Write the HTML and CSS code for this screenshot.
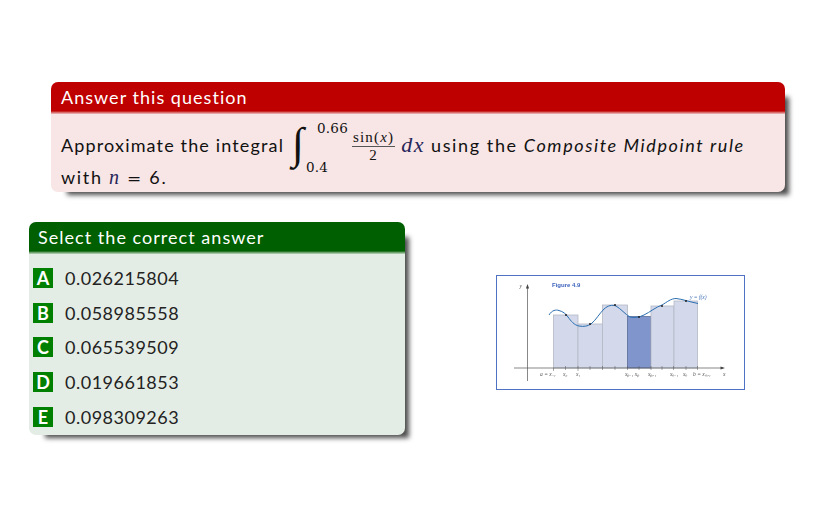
FILE: index.html
```html
<!DOCTYPE html>
<html lang="en">
<head>
<meta charset="utf-8">
<title>Answer this question</title>
<link rel="stylesheet" href="styles.css">
</head>
<body>
<main class="slide">
  <section class="block block-red">
    <h2 class="block-title">Answer this question</h2>
    <div class="block-body question">
      <div class="line line-first">
        <span class="lead">Approximate the integral</span>
        <span class="integral">
          <span class="int-sign">∫</span>
          <span class="limits"><span class="lim-up">0.66</span><span class="lim-low">0.4</span></span>
        </span>
        <span class="frac"><span class="num">sin(<i>x</i>)</span><span class="den">2</span></span>
        <span class="dx">dx</span>
        <span class="tail">using the <em>Composite Midpoint rule</em></span>
      </div>
      <div class="line line-second">
        <span>with <i class="mvar">n</i> <span class="meq">=</span> 6.</span>
      </div>
    </div>
  </section>

  <div class="lower">
    <section class="block block-green">
      <h2 class="block-title">Select the correct answer</h2>
      <ul class="block-body answers">
        <li class="answer"><span class="badge">A</span><span>0.026215804</span></li>
        <li class="answer"><span class="badge">B</span><span>0.058985558</span></li>
        <li class="answer"><span class="badge">C</span><span>0.065539509</span></li>
        <li class="answer"><span class="badge">D</span><span>0.019661853</span></li>
        <li class="answer"><span class="badge">E</span><span>0.098309263</span></li>
      </ul>
    </section>

    <figure class="figure">
      <svg class="chart" viewBox="497 276 247 113" aria-label="Figure 4.9">
        <text x="552" y="287" class="fig-title">Figure 4.9</text>
        <g class="bars">
          <rect x="553.5" y="315" width="24.5" height="53"/>
          <rect x="578" y="324" width="24.5" height="44"/>
          <rect x="602.5" y="305" width="25" height="63"/>
          <rect x="627.5" y="316.5" width="23.5" height="51.5" class="bar-dark"/>
          <rect x="651" y="306" width="23" height="62"/>
          <rect x="674" y="301" width="23.5" height="67"/>
        </g>
        <path class="axis" d="M527.5 286V381M514 368H723"/>
        <path class="arrow" d="M527.5 284l-1.6 4.5h3.2zM725 368l-4.5-1.6v3.2z"/>
        <path class="ticks" d="M553.5 368v3M565.5 366v4M578 366v5M590 366v4M602.5 366v4M615 366v4M627.5 366v4M639 366v4M651 366v4M662 366v4M673.5 366v4M686 366v4M697.5 366v4"/>
        <path class="curve" d="M549 315C552 310 556 309.5 559 310.5C563 311.5 566 314 568 317C571 321 574 325 579 326C584 327 588 326 591 324C596 320 599 314 604 309C608 305.500 612 304.500 616 306C621 309 625 314 630 317C634 318 639 317.500 644 315C650 312 656 307 662 305C667 302 671 298.500 676 298.500C682 299 690 302 698 303.500"/>
        <g class="dots">
          <circle cx="566" cy="315" r="1"/><circle cx="590" cy="324" r="1"/><circle cx="615" cy="305" r="1"/><circle cx="639" cy="317" r="1"/><circle cx="662" cy="306" r="1"/><circle cx="686" cy="301" r="1"/>
        </g>
        <text x="690" y="298.500" class="fig-label blue">y = f(x)</text>
        <text x="519.500" y="287.500" class="fig-label">y</text>
        <text x="540" y="375.500" class="fig-label">a = x₋₁</text>
        <text x="563" y="375.500" class="fig-label">x₀</text>
        <text x="576" y="375.500" class="fig-label">x₁</text>
        <text x="625" y="375.500" class="fig-label">xₚ₋₁ xₚ</text>
        <text x="648" y="375.500" class="fig-label">xₚ₊₁</text>
        <text x="670" y="375.500" class="fig-label">xₙ₋₁</text>
        <text x="683" y="375.500" class="fig-label">xₙ</text>
        <text x="693" y="375.500" class="fig-label">b = xₙ₊₁</text>
        <text x="723" y="375.500" class="fig-label">x</text>
      </svg>
    </figure>
  </div>
</main>
</body>
</html>
```
FILE: styles.css
```css
* { box-sizing: border-box; }
html, body { margin: 0; padding: 0; background: #fff; }
body {
  width: 834px;
  height: 511px;
  overflow: hidden;
  font-family: "Lato", "Liberation Sans", sans-serif;
  color: #111;
}
.slide {
  display: flex;
  flex-direction: column;
  gap: 30px;
  padding: 82px 49px 0 29px;
}
.block {
  border-radius: 7px;
  box-shadow: 10px 9px 5px -6px rgba(0, 0, 0, 0.7);
}
.block-red { margin-left: 22px; height: 110px; background: #f8e5e5; }
.block-green { width: 376px; height: 213px; background: #e4ede5; }
.block-title {
  margin: 0;
  font-size: 18px;
  font-weight: 400;
  letter-spacing: 1.030px;
  color: #fff;
  padding-left: 10px;
  height: 32px;
  line-height: 30px;
  border-radius: 7px 7px 0 0;
}
.block-red .block-title { background: linear-gradient(#bf0000 29px, #cf5050 30px, #efc0c0 32px); }
.block-green .block-title { background: linear-gradient(#005f00 29px, #508f50 30px, #c0d8c0 32px); padding-left: 9px; }
.question { padding: 0 10px; font-size: 18px; letter-spacing: 1.700px; }
.lead { letter-spacing: 1.150px; }
.tail { letter-spacing: 1.600px; margin-left: -1px; }
.line { display: flex; align-items: center; white-space: pre; }
.line-first { height: 62px; }
.line-second { height: 16px; margin-top: -7px; }
.integral { display: flex; margin-left: 9px; height: 50px; margin-top: 4px; }
.int-sign {
  font-family: "Liberation Serif", serif;
  font-size: 44px;
  line-height: 44px;
  width: 13px;
  margin-left: -1px;
  margin-right: 1px;
  letter-spacing: 0;
}
.limits {
  display: flex;
  flex-direction: column;
  justify-content: space-between;
  font-family: "DejaVu Serif", serif;
  font-size: 13.500px;
  letter-spacing: 0.200px;
  line-height: 16px;
}
.lim-up { padding-left: 11px; margin-top: -2px; }
.lim-low { margin-bottom: -3px; }
.frac {
  display: flex;
  flex-direction: column;
  align-items: center;
  margin-left: 4px;
  font-family: "Liberation Serif", serif;
  font-size: 15px;
  letter-spacing: 1.200px;
  line-height: 17px;
  margin-top: 2px;
}
.num { padding: 0 1px; border-bottom: 1px solid #555; }
.den { line-height: 16px; }
.dx {
  font-family: "Liberation Serif", serif;
  font-style: italic;
  font-size: 22px;
  letter-spacing: 1.500px;
  margin: 0 7px 0 6px;
  color: #26265a;
}
.mvar {
  font-family: "Liberation Serif", serif;
  font-size: 20px;
  color: #26265a;
}
.meq { font-family: "DejaVu Serif", serif; font-size: 17px; }
.answers {
  list-style: none;
  margin: 0;
  padding: 14px 0 0 4px;
  display: flex;
  flex-direction: column;
  gap: 14.700px;
}
.answer {
  display: flex;
  align-items: center;
  height: 20px;
  font-size: 18px;
  letter-spacing: 0.500px;
  gap: 12px;
  color: #222;
}
.badge {
  width: 20px;
  height: 20px;
  background: #008000;
  color: #fff;
  font-weight: 700;
  font-size: 18px;
  letter-spacing: 0;
  line-height: 20px;
  text-align: center;
}
.lower { display: flex; align-items: flex-start; }
.figure {
  margin: 53px 0 0 91px;
  width: 249px;
  height: 115px;
  border: 1px solid #4f72c4;
  background: #fff;
}
.chart { display: block; width: 247px; height: 113px; filter: blur(0.45px); }
.fig-title { font: 700 6px "Liberation Sans", sans-serif; fill: #3d63bd; }
.fig-label { font: italic 5.500px "Liberation Serif", serif; fill: #555; }
.fig-label.blue { fill: #3d6fb5; }
.bars rect { fill: #d3d9eb; stroke: #b4b8c4; stroke-width: 0.8; }
.bars .bar-dark { fill: #7f95cb; stroke: #5f6f9a; }
.axis { stroke: #555; stroke-width: 0.7; fill: none; }
.arrow { fill: #444; }
.ticks { stroke: #555; stroke-width: 0.5; fill: none; }
.curve { stroke: #2a6eb0; stroke-width: 1; fill: none; }
.dots circle { fill: #222; }
```
